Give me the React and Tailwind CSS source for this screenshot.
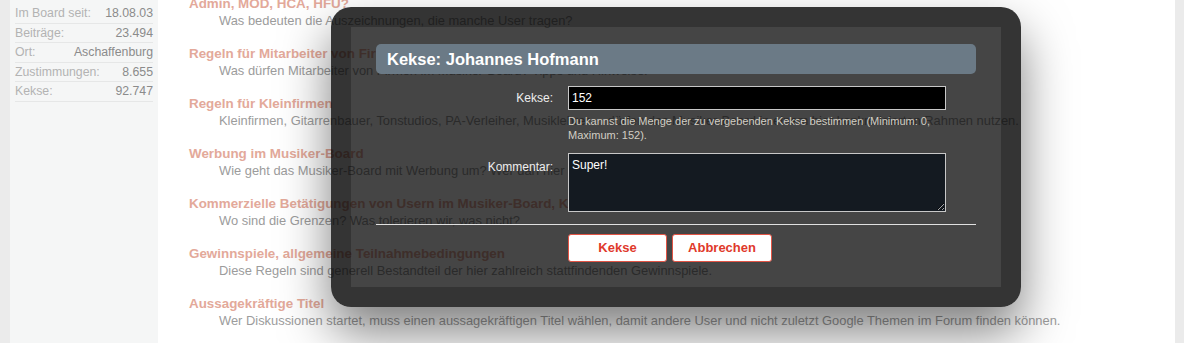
import { useState } from 'react';

const profileRows = [
  ['Im Board seit:', '18.08.03'],
  ['Beiträge:', '23.494'],
  ['Ort:', 'Aschaffenburg'],
  ['Zustimmungen:', '8.655'],
  ['Kekse:', '92.747']
];

const ruleTopics = [
  {
    title: 'Admin, MOD, HCA, HFU?',
    text: 'Was bedeuten die Auszeichnungen, die manche User tragen?'
  },
  {
    title: 'Regeln für Mitarbeiter von Firmen',
    text: 'Was dürfen Mitarbeiter von Firmen im Musiker-Board? Tipps und Hinweise.'
  },
  {
    title: 'Regeln für Kleinfirmen',
    text: 'Kleinfirmen, Gitarrenbauer, Tonstudios, PA-Verleiher, Musiklehrer ... dürfen das Musiker-Board in einem hier konkretisierten Rahmen nutzen.'
  },
  {
    title: 'Werbung im Musiker-Board',
    text: 'Wie geht das Musiker-Board mit Werbung um? Wer darf hier wie werben?'
  },
  {
    title: 'Kommerzielle Betätigungen von Usern im Musiker-Board, Kleinanzeigen',
    text: 'Wo sind die Grenzen? Was tolerieren wir, was nicht?'
  },
  {
    title: 'Gewinnspiele, allgemeine Teilnahmebedingungen',
    text: 'Diese Regeln sind generell Bestandteil der hier zahlreich stattfindenden Gewinnspiele.'
  },
  {
    title: 'Aussagekräftige Titel',
    text: 'Wer Diskussionen startet, muss einen aussagekräftigen Titel wählen, damit andere User und nicht zuletzt Google Themen im Forum finden können.'
  }
];

export default function App() {
  const [amount, setAmount] = useState('152');
  const [comment, setComment] = useState('Super!');

  return (
    <div className="relative h-[343px] w-[1184px] overflow-hidden bg-[#ebebeb] font-['Liberation_Sans',Arial,sans-serif]">
      <div className="flex h-full pl-[10px]">
        <aside className="w-[148px] bg-[#f5f6f6] px-[5px] pt-[4px]">
          {profileRows.map(([label, value]) => (
            <div key={label} className="flex h-[19.5px] items-center justify-between border-b border-[#e6e7e7] text-[12.3px]">
              <span className="text-[#b3b3b3]">{label}</span>
              <span className="text-[#8b8b8b]">{value}</span>
            </div>
          ))}
        </aside>
        <main className="w-[1017px] bg-white pl-[31px]">
          <ol className="-mt-[5px]">
            {ruleTopics.map((topic) => (
              <li key={topic.title} className="mb-[16px] whitespace-nowrap">
                <p className="h-[17px] text-[13.4px] leading-[17px] font-bold text-[#e3a99a]">{topic.title}</p>
                <p className="h-[17px] pl-[30px] text-[12.9px] leading-[17px] text-[#9c9c9c]">{topic.text}</p>
              </li>
            ))}
          </ol>
        </main>
      </div>

      <form
        onSubmit={(event) => event.preventDefault()}
        className="absolute left-[331px] top-[7px] w-[690px] rounded-[20px] border-[20px] border-black/25 bg-black/[0.73] px-[25px] pt-[17px] pb-[25px] text-[#eee] shadow-[0_25px_50px_rgba(0,0,0,0.5)]"
      >
        <h2 className="mb-[12px] h-[30px] rounded-[5px] bg-[#6b7a86] pl-[11px] text-[16.5px] leading-[30px] font-bold text-white">
          Kekse: Johannes Hofmann
        </h2>
        <div className="grid grid-cols-[177px_378px] gap-x-[15px]">
          <label htmlFor="cookie-amount" className="text-right text-[12px] leading-[24px]">Kekse:</label>
          <div>
            <input
              id="cookie-amount"
              value={amount}
              onChange={(event) => setAmount(event.target.value)}
              className="block h-[24px] w-full border border-[#c8c8c8] bg-black px-[3px] text-[12px] text-white outline-none"
            />
            <p className="mt-[4px] text-[11px] leading-[14px] text-[#d2cec4]">
              Du kannst die Menge der zu vergebenden Kekse bestimmen (Minimum: 0,
              <br />
              Maximum: 152).
            </p>
          </div>
          <label htmlFor="cookie-comment" className="mt-[11px] pt-[7px] text-right text-[12px] leading-[14px]">Kommentar:</label>
          <textarea
            id="cookie-comment"
            value={comment}
            onChange={(event) => setComment(event.target.value)}
            className="mt-[11px] block h-[59px] w-full border border-[#c8c8c8] bg-[#141a21] px-[3px] pt-[4px] text-[12px] leading-[14px] text-white outline-none"
          />
        </div>
        <hr className="mt-[12px] border-0 border-t border-[#e0e0e0]" />
        <div className="mt-[9px] flex gap-[5px] pl-[192px]">
          <button className="h-[28px] w-[99px] rounded-[3px] border border-[#e25445] bg-white text-[13px] font-bold text-[#e0392b]">
            Kekse
          </button>
          <button type="button" className="h-[28px] w-[100px] rounded-[3px] border border-[#e25445] bg-white text-[13px] font-bold text-[#e0392b]">
            Abbrechen
          </button>
        </div>
      </form>
    </div>
  );
}
